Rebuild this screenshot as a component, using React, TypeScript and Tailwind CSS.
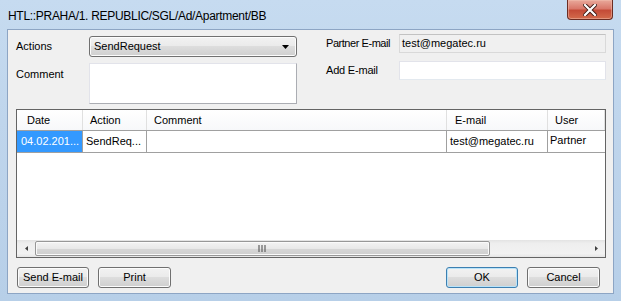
import React from 'react';

const ui = "font-['Liberation_Sans','Arial',sans-serif] text-[11px] text-black leading-none";

function Win7Button({ label, width, isDefault = false }: { label: string; width: string; isDefault?: boolean }) {
  return (
    <div
      className={`${width} h-[21px] rounded-[3px] border flex items-center justify-center bg-[linear-gradient(#f2f2f2_0%,#ebebeb_45%,#dddddd_50%,#cfcfcf_100%)] ${
        isDefault
          ? 'border-[#3c7fb1] shadow-[inset_0_0_0_1px_#b9e3f9]'
          : 'border-[#707070] shadow-[inset_0_0_0_1px_#fcfcfc]'
      }`}
    >
      {label}
    </div>
  );
}

const cols = [
  { name: 'Date', w: 'w-[66px]', pl: 'pl-[10px]' },
  { name: 'Action', w: 'w-[64px]', pl: 'pl-[7px]' },
  { name: 'Comment', w: 'w-[300px]', pl: 'pl-[7px]' },
  { name: 'E-mail', w: 'w-[101px]', pl: 'pl-[8px]' },
  { name: 'User', w: 'flex-1', pl: 'pl-[7px]' },
];

export default function App() {
  return (
    <div className={`${ui} relative w-[621px] h-[301px] overflow-hidden bg-[linear-gradient(#c6dbf0_0%,#bfd5ec_40%,#b7cfe8_100%)]`}>
      {/* title bar */}
      <div className="h-[29px] flex items-center pl-[8px] pt-[3px] text-[12px] tracking-[-0.3px] text-[#000]">
        HTL::PRAHA/1. REPUBLIC/SGL/Ad/Apartment/BB
      </div>

      {/* close button */}
      <div className="absolute top-0 right-[8px] w-[46px] h-[20px] rounded-b-[4px] border border-t-0 border-[#6b2c22] bg-[linear-gradient(#e9a99b_0%,#d9786a_45%,#c44b37_55%,#d36b4c_100%)] shadow-[inset_0_0_0_1px_#f2c0b080] flex items-center justify-center">
        <svg width="14" height="12" viewBox="0 0 14 12">
          <path d="M2 1 L12 11 M12 1 L2 11" stroke="#3d1a14" strokeWidth="4" strokeLinecap="square" />
          <path d="M2 1 L12 11 M12 1 L2 11" stroke="#ffffff" strokeWidth="2.2" strokeLinecap="square" />
        </svg>
      </div>

      {/* client area */}
      <div className="mx-[7px] h-[265px] border border-[#8da5c4] bg-[#f0f0f0] flex flex-col">
        <div className="flex pl-[8px]">
          <div className="flex flex-col pt-[6px] gap-[6px]">
            <div className="flex items-center h-[21px]">
              <span className="w-[73px]">Actions</span>
              <div className="w-[208px] h-[21px] rounded-[3px] border border-[#707070] bg-[linear-gradient(#f2f2f2_0%,#ebebeb_45%,#dddddd_50%,#cfcfcf_100%)] shadow-[inset_0_0_0_1px_#fcfcfc] flex items-center pl-[4px] pr-[7px]">
                <span className="flex-1">SendRequest</span>
                <svg width="7" height="4" viewBox="0 0 7 4">
                  <path d="M0 0 H7 L3.5 4 Z" fill="#000" />
                </svg>
              </div>
            </div>
            <div className="flex h-[41px]">
              <span className="w-[73px] pt-[6px]">Comment</span>
              <div className="w-[208px] h-[41px] border border-[#abadb3] border-t-[#e2e3ea] bg-white border-l-[#e2e3ea]" />
            </div>
          </div>
          <div className="ml-[29px] flex flex-col pt-[4px] gap-[8px]">
            <div className="flex items-center h-[19px]">
              <span className="w-[73px] tracking-[-0.45px]">Partner E-mail</span>
              <div className="w-[207px] h-[19px] border border-[#d9d9d9] border-t-[#c2c2c2] bg-[#f0f0f0] flex items-center pl-[2px]">
                test@megatec.ru
              </div>
            </div>
            <div className="flex items-center h-[19px]">
              <span className="w-[73px] tracking-[-0.2px]">Add E-mail</span>
              <div className="w-[207px] h-[19px] border border-[#e2e3ea] border-b-[#e3e9ef] bg-white" />
            </div>
          </div>
        </div>

        {/* grid */}
        <div className="ml-[8px] mt-[5px] w-[590px] h-[149px] border border-[#646464] bg-white flex flex-col">
          <div className="flex h-[21px] border-b border-[#a0a0a0] bg-[linear-gradient(#ffffff,#f7f8fa)]">
            {cols.map((c) => (
              <div key={c.name} className={`${c.w} ${c.pl} flex items-center border-r border-[#e0e0e0]`}>
                {c.name}
              </div>
            ))}
          </div>
          <div className="flex h-[22px] border-b border-[#a0a0a0]">
            <div className="w-[66px] bg-[#3399ff] text-white flex items-center pl-[4px] border-r border-[#a0a0a0]">04.02.201...</div>
            <div className="w-[64px] flex items-center pl-[3px] border-r border-[#a0a0a0]">SendReq...</div>
            <div className="w-[300px] border-r border-[#a0a0a0]" />
            <div className="w-[101px] flex items-center pl-[3px] border-r border-[#a0a0a0]">test@megatec.ru</div>
            <div className="flex-1 flex items-center pl-[2px] pb-[2px]">Partner</div>
          </div>
          <div className="flex-1" />
          {/* horizontal scrollbar */}
          <div className="h-[17px] flex items-center bg-[linear-gradient(#e3e3e3,#eeeeee_20%,#f2f2f2_80%,#e6e6e6)]">
            <div className="w-[18px] h-full flex items-center justify-center">
              <svg width="3" height="5" viewBox="0 0 3 5"><path d="M3 0 V5 L0 2.5 Z" fill="#404040" /></svg>
            </div>
            <div className="w-[455px] h-[15px] rounded-[2px] border border-[#979797] bg-[linear-gradient(#f3f3f3_0%,#e8e8e8_50%,#d6d6d6_51%,#cfcfcf_100%)] shadow-[inset_0_0_0_1px_#fafafa] flex items-center justify-center">
              <svg width="9" height="7" viewBox="0 0 9 7">
                <path d="M1 0 V7 M4 0 V7 M7 0 V7" stroke="#606060" strokeWidth="1.2" />
              </svg>
            </div>
            <div className="flex-1" />
            <div className="w-[18px] h-full flex items-center justify-center">
              <svg width="3" height="5" viewBox="0 0 3 5"><path d="M0 0 V5 L3 2.5 Z" fill="#404040" /></svg>
            </div>
          </div>
        </div>

        {/* buttons */}
        <div className="flex mt-[9px] pl-[9px] pr-[13px] gap-[9px]">
          <Win7Button label="Send E-mail" width="w-[72px]" />
          <Win7Button label="Print" width="w-[73px]" />
          <div className="flex-1" />
          <Win7Button label="OK" width="w-[72px]" isDefault />
          <Win7Button label="Cancel" width="w-[73px]" />
        </div>
      </div>
    </div>
  );
}
